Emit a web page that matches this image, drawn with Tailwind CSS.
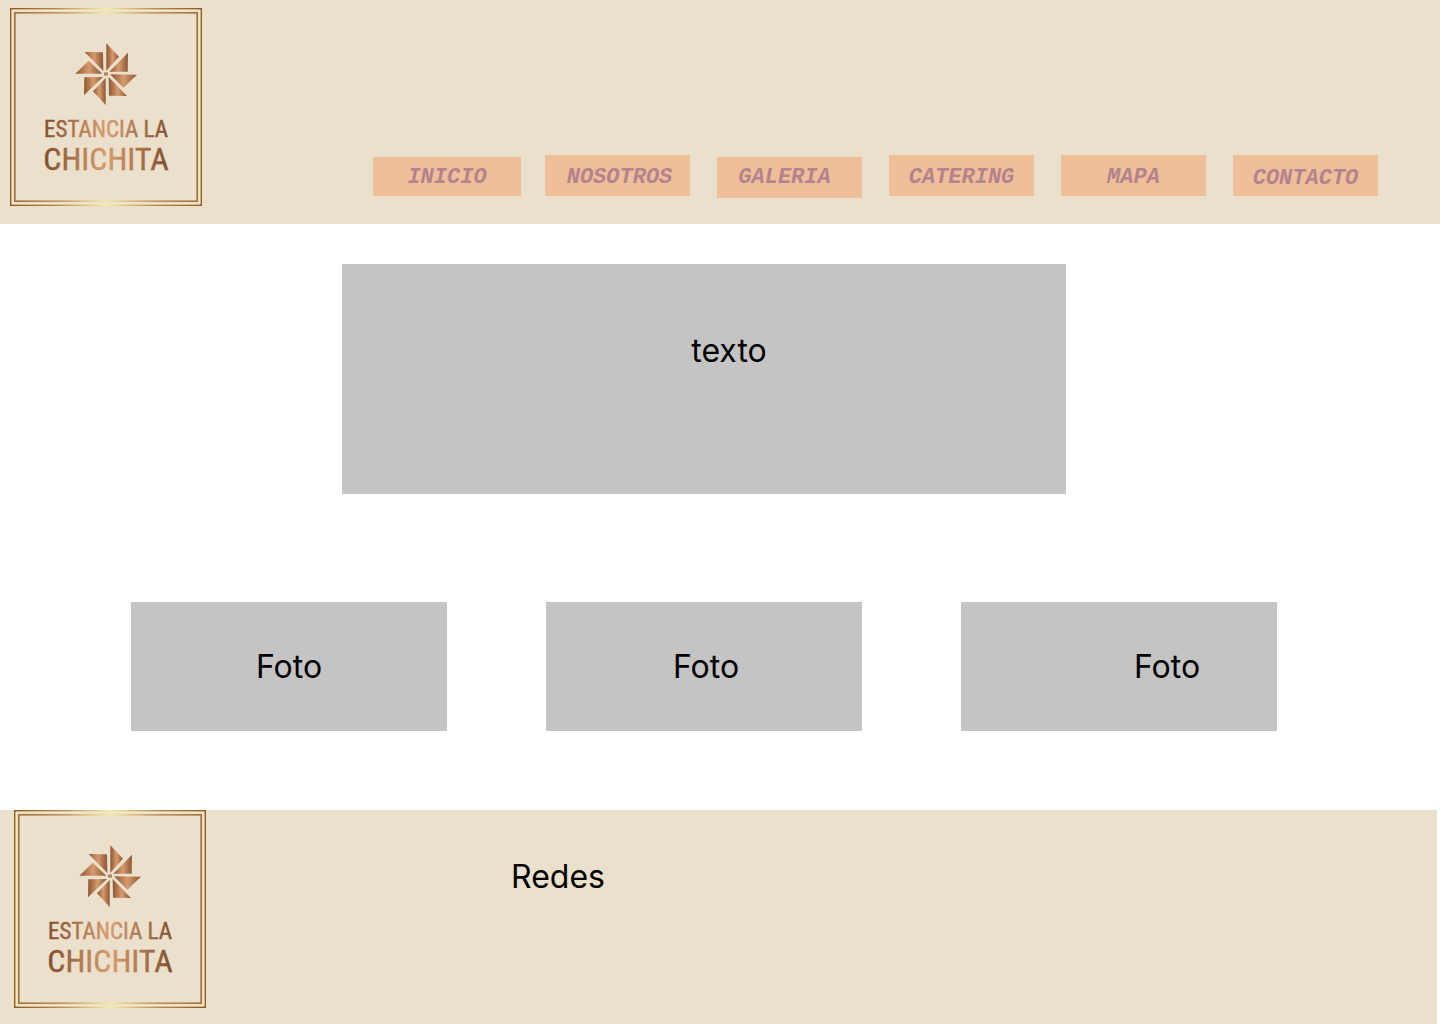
<!DOCTYPE html>
<html lang="es">
<head>
<meta charset="utf-8">
<meta name="viewport" content="width=device-width, initial-scale=1">
<title>Estancia La Chichita</title>
<script src="https://cdn.jsdelivr.net/npm/@tailwindcss/browser@4"></script>
</head>
<body class="flex min-h-screen flex-col bg-white font-['Inter',sans-serif] text-black">

<!-- Shared logo artwork -->
<svg class="absolute size-0" aria-hidden="true">
  <defs>
    <linearGradient id="gold" gradientUnits="userSpaceOnUse" x1="0" y1="0" x2="192" y2="0">
      <stop offset="0" stop-color="#945b1c"/><stop offset=".25" stop-color="#b98a4c"/><stop offset=".5" stop-color="#f6ee9f"/><stop offset=".75" stop-color="#b98a4c"/><stop offset="1" stop-color="#945b1c"/>
    </linearGradient>
    <linearGradient id="copper">
      <stop offset="0" stop-color="#8c5735"/><stop offset=".5" stop-color="#d69a6c"/><stop offset="1" stop-color="#8c5735"/>
    </linearGradient>
    <linearGradient id="lettering" gradientUnits="userSpaceOnUse" x1="35" y1="0" x2="157" y2="0">
      <stop offset="0" stop-color="#84502f"/><stop offset=".5" stop-color="#d89c6e"/><stop offset="1" stop-color="#84502f"/>
    </linearGradient>
    <symbol id="logo" viewBox="0 0 192 198">
      <g fill="none" stroke="url(#gold)">
        <rect x=".75" y=".75" width="190.5" height="196.5" stroke-width="1.5"/>
        <rect x="2.5" y="2.5" width="187" height="193" stroke="#f3e6cf" stroke-width="1.5"/>
        <rect x="4.8" y="4.8" width="182.4" height="188.4" stroke-width="1.7" stroke-opacity=".85"/>
      </g>
      <g transform="translate(60 30) scale(.33333)" fill="url(#copper)">
        <path d="M109 16 147 56 109 98Z"/>
        <path d="M174 44 173 101 118 101Z"/>
        <path d="M120 109 201 110 160 149Z"/>
        <path d="M116 117 171 174 117 173Z"/>
        <path d="M107 120 107 201 69 160Z"/>
        <path d="M99 117 42 172 43 118Z"/>
        <path d="M97 107 16 107 56 68Z"/>
        <path d="M100 99 99 43 44 42Z"/>
        <circle cx="108" cy="108" r="6"/>
      </g>
      <g fill="url(#lettering)" stroke="url(#lettering)" stroke-width=".4" text-anchor="middle" font-family="'Roboto Condensed','Liberation Sans Narrow','Open Sans Condensed','Liberation Sans',sans-serif">
        <text x="96" y="129" font-size="23">ESTANCIA LA</text>
        <text x="96" y="162" font-size="32">CHICHITA</text>
      </g>
    </symbol>
  </defs>
</svg>

<header class="flex min-h-56 items-start bg-[#eae0cc] pl-2.5">
  <a href="#" class="mt-2 shrink-0" aria-label="Estancia La Chichita">
    <svg class="h-[198px] w-48"><use href="#logo"/></svg>
  </a>
  <nav class="mr-[62px] ml-[171px] grid flex-1 grid-cols-6 items-start gap-[27px] pt-[155px] font-['Liberation_Mono',monospace] text-[22px] leading-[26px] font-bold text-[#b5838d] italic">
    <a href="#inicio" class="mt-0.5 -mr-[3px] h-[39px] bg-[#eebf99] pt-2 text-center">INICIO</a>
    <a href="#nosotros" class="h-[41px] bg-[#eebf99] pt-2.5 pl-1 text-center">NOSOTROS</a>
    <a href="#galeria" class="mt-0.5 h-[41px] bg-[#eebf99] pt-2 pr-2.5 text-center">GALERIA</a>
    <a href="#catering" class="h-[41px] bg-[#eebf99] pt-2.5 text-center">CATERING</a>
    <a href="#mapa" class="h-[41px] bg-[#eebf99] pt-2.5 text-center">MAPA</a>
    <a href="#contacto" class="h-[41px] bg-[#eebf99] pt-[11px] text-center">CONTACTO</a>
  </nav>
</header>

<main class="flex-1 pt-10 pb-[79px] text-[32px] leading-10">
  <section class="mr-[374px] ml-[342px] h-[230px] bg-[#c4c4c4] pt-[67px] pl-[50px] text-center">
    <p>texto</p>
  </section>
  <section class="mt-[108px] mr-[163px] ml-[131px] grid grid-cols-3 gap-[99px] text-center">
    <div class="h-[129px] bg-[#c4c4c4] pt-[45px]">Foto</div>
    <div class="h-[129px] bg-[#c4c4c4] pt-[45px] pl-1">Foto</div>
    <div class="h-[129px] bg-[#c4c4c4] pt-[45px] pl-24">Foto</div>
  </section>
</main>

<footer class="mr-[3px] flex min-h-[214px] items-start bg-[#eae0cc] pl-3.5">
  <a href="#" class="shrink-0" aria-label="Estancia La Chichita">
    <svg class="h-[198px] w-48"><use href="#logo"/></svg>
  </a>
  <h2 class="ml-[305px] pt-[47px] text-[32px] leading-10">Redes</h2>
</footer>
</body>
</html>
